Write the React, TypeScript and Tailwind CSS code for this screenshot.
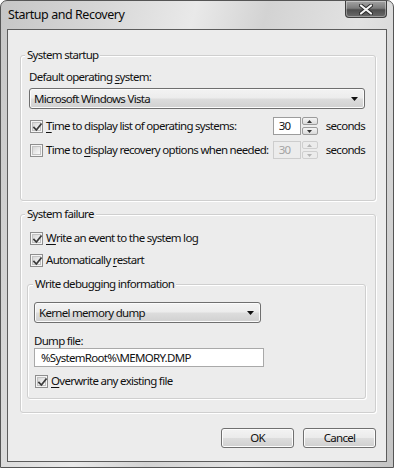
import React from "react";

function Checkbox({ checked, className = "" }: { checked?: boolean; className?: string }) {
  return (
    <span className={`relative w-[13px] h-[13px] shrink-0 border border-[#8e8e8e] bg-[#f5f5f5] flex items-center justify-center ${className}`}>
      <span className="w-[9px] h-[9px] border border-[#c2c2c2] bg-gradient-to-br from-[#d6d6d6] to-[#fafafa]" />
      {checked && (
        <svg className="absolute left-[1px] top-[1px]" width="11" height="11" viewBox="0 0 11 11">
          <path d="M2 5.5 L4.4 8 L9 2.2" fill="none" stroke="#3c3c3c" strokeWidth="1.8" strokeLinecap="square" />
        </svg>
      )}
    </span>
  );
}

function CheckRow({ checked, children, className = "" }: { checked?: boolean; children: React.ReactNode; className?: string }) {
  return (
    <div className={`h-[16px] flex items-center ${className}`}>
      <Checkbox checked={checked} />
      <span className="ml-[3px] leading-[16px] whitespace-nowrap">{children}</span>
    </div>
  );
}

function U({ children }: { children: React.ReactNode }) {
  return <span className="underline underline-offset-[2px]">{children}</span>;
}

function Dropdown({ text, className = "" }: { text: string; className?: string }) {
  return (
    <div className={`h-[21px] rounded-[3px] border border-[#6f6f6f] shadow-[inset_0_0_0_1px_#fbfbfb] bg-[linear-gradient(to_bottom,#f3f3f3_0%,#ececec_48%,#dddddd_52%,#d0d0d0_100%)] flex items-center justify-between pl-[4px] pr-[6px] ${className}`}>
      <span className="leading-[16px] whitespace-nowrap">{text}</span>
      <svg width="7" height="4" viewBox="0 0 7 4">
        <path d="M0 0 H7 L3.5 4 Z" fill="#111" />
      </svg>
    </div>
  );
}

function SpinBtn({ up, disabled }: { up?: boolean; disabled?: boolean }) {
  return (
    <div className={`h-[8px] rounded-[2px] border ${disabled ? "border-[#cfcfcf] bg-[#ececec]" : "border-[#9b9b9b] bg-[linear-gradient(to_bottom,#f4f4f4,#dadada)]"} flex items-center justify-center`}>
      <svg width="5" height="3" viewBox="0 0 5 3">
        <path d={up ? "M0 3 H5 L2.5 0 Z" : "M0 0 H5 L2.5 3 Z"} fill={disabled ? "#b5b5b5" : "#333"} />
      </svg>
    </div>
  );
}

function Spinner({ value, disabled }: { value: string; disabled?: boolean }) {
  return (
    <div className="flex h-[18px] w-[45px] shrink-0">
      <div className={`w-[28px] h-full border flex items-center pl-[5px] leading-[16px] ${disabled ? "border-[#cdcdcd] bg-[#ececec] text-[#a3a3a3]" : "border-[#9c9c9c] bg-white"}`}>
        {value}
      </div>
      <div className="ml-[1px] w-[16px] h-full flex flex-col justify-between">
        <SpinBtn up disabled={disabled} />
        <SpinBtn disabled={disabled} />
      </div>
    </div>
  );
}

function GroupBox({ label, labelLeft, className = "", children }: { label: string; labelLeft: string; className?: string; children: React.ReactNode }) {
  return (
    <div className={`relative border border-[#cfcfcf] rounded-[3px] shadow-[1px_1px_0_#ffffff,inset_1px_1px_0_#ffffff] ${className}`}>
      <span className={`absolute top-[-9px] ${labelLeft} px-[2px] bg-[#ececec] leading-[16px] whitespace-nowrap`}>{label}</span>
      {children}
    </div>
  );
}

function VButton({ children }: { children: React.ReactNode }) {
  return (
    <div className="w-[73px] h-[20px] rounded-[3px] border border-[#707070] shadow-[inset_0_0_0_1px_#fcfcfc] bg-[linear-gradient(to_bottom,#f3f3f3_0%,#ebebeb_48%,#dddddd_52%,#cfcfcf_100%)] flex items-center justify-center leading-[16px]">
      {children}
    </div>
  );
}

export default function App() {
  return (
    <div className="w-[394px] h-[468px] flex flex-col border border-[#555555] rounded-t-[7px] overflow-hidden bg-[linear-gradient(105deg,#c6c6c6_0%,#d7d7d7_20%,#e9e9e9_38%,#d3d3d3_52%,#e2e2e2_70%,#c4c4c4_100%)] font-['Noto_Sans',sans-serif] text-[11.5px] tracking-[-0.7px] text-[#111111]">
      <div className="h-[28px] shrink-0 flex items-start justify-between">
        <div className="pl-[7px] pt-[6px] leading-[16px] text-[12.5px] tracking-[-0.45px] text-[#0a0a0a]">Startup and Recovery</div>
        <div className="mr-[6px] w-[42px] h-[17px] rounded-b-[4px] border border-[#3e3e3e] border-t-0 shadow-[inset_0_0_0_1px_rgba(255,255,255,0.35)] bg-[linear-gradient(to_bottom,#a4a4a4_0%,#7c7c7c_45%,#4e4e4e_55%,#6a6a6a_100%)] flex items-center justify-center">
          <svg width="14" height="11" viewBox="0 0 14 11">
            <path d="M2 1.5 L12 9.5 M12 1.5 L2 9.5" stroke="#2a2a2a" strokeWidth="4" strokeLinecap="round" />
            <path d="M2 1.5 L12 9.5 M12 1.5 L2 9.5" stroke="#f4f4f4" strokeWidth="2.2" strokeLinecap="round" />
          </svg>
        </div>
      </div>

      <div className="mx-[6px] h-[433px] shrink-0 border border-[#5c5c5c] bg-[#ececec] flex flex-col">
        <GroupBox label="System startup" labelLeft="left-[4px]" className="mt-[25px] ml-[12px] mr-[10px] pt-[13px] pl-[8px] pr-[10px] pb-[41px]">
          <div className="h-[16px] leading-[16px]">
            Default operating <U>s</U>ystem:
          </div>
          <Dropdown text="Microsoft Windows Vista" className="mt-[3px]" />
          <div className="mt-[8px] h-[18px] flex items-center">
            <div className="w-[248px] flex items-center pl-[1px]">
              <CheckRow checked>
                <U>T</U>ime to display list of operating systems:
              </CheckRow>
            </div>
            <Spinner value="30" />
            <span className="ml-[8px] leading-[16px]">seconds</span>
          </div>
          <div className="mt-[6px] h-[18px] flex items-center">
            <div className="w-[248px] flex items-center pl-[1px]">
              <CheckRow>
                Time to <U>d</U>isplay recovery options when needed:
              </CheckRow>
            </div>
            <Spinner value="30" disabled />
            <span className="ml-[8px] leading-[16px]">seconds</span>
          </div>
        </GroupBox>

        <GroupBox label="System failure" labelLeft="left-[4px]" className="mt-[13px] ml-[12px] mr-[10px] pt-[15px] pl-[6px] pr-[9px] pb-[13px]">
          <CheckRow checked className="pl-[3px]">
            <U>W</U>rite an event to the system log
          </CheckRow>
          <CheckRow checked className="pl-[3px] mt-[6px]">
            Automatically <U>r</U>estart
          </CheckRow>
          <GroupBox label="Write debugging information" labelLeft="left-[5px]" className="mt-[16px] pt-[17px] pl-[6px] pb-[9px]">
            <Dropdown text="Kernel memory dump" className="w-[227px]" />
            <div className="mt-[11px] h-[14px] leading-[14px]">Dump file:</div>
            <div className="w-[230px] h-[19px] border border-[#a9a9a9] bg-white flex items-center pl-[6px] leading-[16px] whitespace-nowrap">
              %SystemRoot%\MEMORY.DMP
            </div>
            <CheckRow checked className="pl-[1px] mt-[6px]">
              <U>O</U>verwrite any existing file
            </CheckRow>
          </GroupBox>
        </GroupBox>

        <div className="mt-[15px] pr-[10px] flex justify-end gap-[9px]">
          <VButton>OK</VButton>
          <VButton>Cancel</VButton>
        </div>
      </div>
    </div>
  );
}
